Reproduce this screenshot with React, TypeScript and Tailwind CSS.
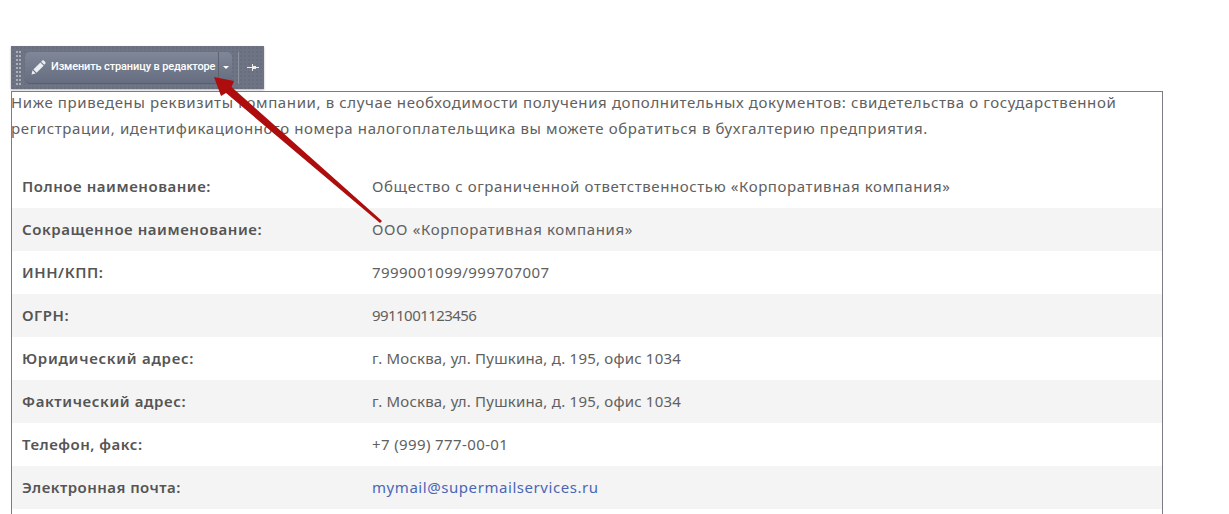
const rows: [string, string, React.ReactNode, string][] = [
  ['Полное наименование:', 'tracking-[0.55px]', 'Общество с ограниченной ответственностью «Корпоративная компания»', 'tracking-[0.6px]'],
  ['Сокращенное наименование:', 'tracking-[0.55px]', 'ООО «Корпоративная компания»', 'tracking-[0.63px]'],
  ['ИНН/КПП:', 'tracking-[0.55px]', '7999001099/999707007', 'tracking-[0.45px]'],
  ['ОГРН:', 'tracking-[0.55px]', '9911001123456', 'tracking-[-0.55px]'],
  ['Юридический адрес:', 'tracking-[0.72px]', 'г. Москва, ул. Пушкина, д. 195, офис 1034', 'tracking-[0.2px]'],
  ['Фактический адрес:', 'tracking-[0.6px]', 'г. Москва, ул. Пушкина, д. 195, офис 1034', 'tracking-[0.2px]'],
  ['Телефон, факс:', 'tracking-[0.5px]', '+7 (999) 777-00-01', 'tracking-[0.38px]'],
  ['Электронная почта:', 'tracking-[0.45px]', <span className="text-[#4a66b8]">mymail@supermailservices.ru</span>, 'tracking-[0.56px]'],
];

function Grip() {
  return (
    <div className="w-[5px] h-[34px] mr-[4px] shrink-0 grid grid-cols-2 gap-x-[1px] gap-y-[2px] content-start">
      {Array.from({ length: 18 }).map((_, i) => (
        <span key={i} className="w-[2px] h-[2px] bg-[#a9aeb8]" />
      ))}
    </div>
  );
}

export default function App() {
  return (
    <div className="relative h-[514px] overflow-hidden bg-white font-['Noto_Sans',sans-serif] text-[15px] text-[#606060]">
      <div className="pt-[46px] pl-[11px]">
        {/* Toolbar */}
        <div className="w-[253px] h-[43px] bg-[#6e7484] bg-[radial-gradient(#686e7e_1px,transparent_1px)] bg-[length:4px_4px] flex items-center pl-[5px] shadow-[0_1px_2px_rgba(0,0,0,0.3)]">
          <Grip />
          <div className="w-[207px] h-[32px] shrink-0 rounded-[5px] flex items-center bg-gradient-to-b from-[#808798] to-[#666d80] border-b border-[#585e6e] text-white font-['Roboto',sans-serif] text-[11px] font-medium tracking-[-0.14px]">
            <svg className="ml-[6px] mr-[5px] shrink-0" width="15" height="15" viewBox="0 0 15 15" fill="#eceff2">
              <path d="M0.5 14.5l1-4.2 3.2 3.2zM2.4 9.5l7-7 3.2 3.2-7 7zM10.2 1.8l1.2-1.2c.4-.4 1-.4 1.4 0l1.6 1.6c.4.4.4 1 0 1.4l-1.2 1.2z" />
            </svg>
            <span className="whitespace-nowrap">Изменить страницу в редакторе</span>
            <div className="ml-auto w-[14px] h-full border-l border-[#5c6272] flex items-center justify-center">
              <span className="border-x-[3px] border-x-transparent border-t-[3px] border-t-white" />
            </div>
          </div>
          <div className="ml-[6px] w-[1px] h-[32px] bg-[#8d93a1] shrink-0" />
          <svg className="ml-[8px] shrink-0" width="12" height="7" viewBox="0 0 12 7" fill="#eee">
            <path d="M0 3h5v1H0zM5 0h1v7H5zM6 2h3v3H6zM9 3h3v1H9z" />
          </svg>
        </div>

        {/* Content */}
        <div className="mt-[2px] w-[1152px] border border-[#7a7d84] pb-[20px]">
          <p className="leading-[26px] tracking-[0.62px] -ml-[1px] -mt-[3px] whitespace-nowrap">
            Ниже приведены реквизиты компании, в случае необходимости получения дополнительных документов: свидетельства о государственной
            <br />
            регистрации, идентификационного номера налогоплательщика вы можете обратиться в бухгалтерию предприятия.
          </p>
          <div className="mt-[24px]">
            {rows.map(([k, kt, v, vt], i) => (
              <div key={i} className={`h-[43px] flex items-center pl-[10px] ${i % 2 === 1 ? 'bg-[#f4f4f4]' : ''}`}>
                <div className={`w-[350px] font-semibold text-[#555] ${kt}`}>{k}</div>
                <div className={vt}>{v}</div>
              </div>
            ))}
          </div>
        </div>
      </div>

      {/* Arrow annotation */}
      <svg className="absolute left-0 top-0 pointer-events-none" width="1229" height="514">
        <path d="M214 77L234 81L231.5 87L382 221L380 223L226 93L221 96Z" fill="#ae0d0d" />
      </svg>
    </div>
  );
}
